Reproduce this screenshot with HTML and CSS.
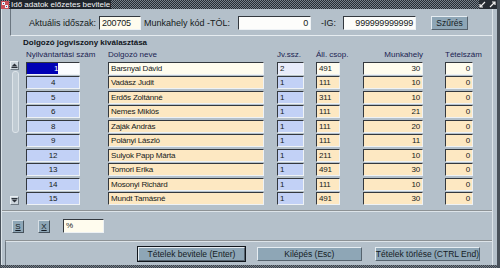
FILE: index.html
```html
<!DOCTYPE html>
<html lang="hu">

<head>
  <meta charset="UTF-8">
  <title>Idő adatok előzetes bevitele</title>
  <link rel="stylesheet" href="styles.css">
</head>

<body>
  <div class="window">
    <div class="titlebar">
      <span class="title-icon">
        <svg width="8" height="8" viewBox="0 0 8 8">
          <rect x="0" y="0" width="8" height="8" fill="#c8505a"/>
          <rect x="1" y="1" width="3" height="3" fill="#f4f4f4"/>
          <rect x="4" y="4" width="3" height="3" fill="#f4f4f4"/>
          <rect x="2" y="2" width="1" height="1" fill="#3050a0"/>
          <rect x="5" y="5" width="1" height="1" fill="#3050a0"/>
        </svg>
      </span>
      <span class="title-text">Idő adatok előzetes bevitele</span>
      <span class="title-fill"></span>
      <span class="title-btns">
        <svg width="7" height="7" viewBox="0 0 7 7">
          <path d="M6 1L1.5 5.5M1 3v3h3" stroke="#f0f0f0" fill="none" stroke-width="1.2"/>
        </svg>
        <svg width="7" height="7" viewBox="0 0 7 7">
          <path d="M1 6L5.5 1.5M3 1h3v3" stroke="#f0f0f0" fill="none" stroke-width="1.2"/>
        </svg>
      </span>
    </div>

    <div class="canvas">
      <div class="filter-frame">
        <span class="lbl lbl-period">Aktuális időszak:</span>
        <div class="field f-cream f-period">200705</div>
        <span class="lbl lbl-from">Munkahely kód -TÓL:</span>
        <div class="field f-white f-code num">0</div>
        <span class="lbl lbl-to">-IG:</span>
        <div class="field f-white f-code num">999999999999</div>
        <button class="btn btn-filter">Szűrés</button>
      </div>

      <div class="list-frame">
        <div class="section-title">Dolgozó jogviszony kiválasztása</div>
        <div class="grid">
          <div class="hd hd-nyilv">Nyilvántartási szám</div>
          <div class="hd">Dolgozó neve</div>
          <div class="hd">Jv.ssz.</div>
          <div class="hd">Áll. csop.</div>
          <div class="hd hd-right hd-munka">Munkahely</div>
          <div class="hd hd-right hd-tetel">Tételszám</div>

          <div class="scrollbar">
            <div class="sb-btn">
              <svg width="7" height="5" viewBox="0 0 7 5"><path d="M3.5 0.5L6.5 3.5H0.5z" fill="#2a3038"/><path d="M0.5 4.5h6" stroke="#2a3038"/></svg>
            </div>
            <div class="sb-track"><div class="sb-thumb"></div></div>
            <div class="sb-btn">
              <svg width="7" height="5" viewBox="0 0 7 5"><path d="M0.5 0.5h6" stroke="#2a3038"/><path d="M0.5 1.5H6.5L3.5 4.5z" fill="#2a3038"/></svg>
            </div>
          </div>

          <div class="field f-nyilv f-selected"><span class="sel-text">1</span></div>
          <div class="field f-name f-cream">Barsnyai Dávid</div>
          <div class="field f-jv f-pale">2</div>
          <div class="field f-all f-cream">491</div>
          <div class="field f-munka f-cream num">30</div>
          <div class="field f-tetel f-cream num">0</div>

          <div class="field f-nyilv f-blue">4</div>
          <div class="field f-name f-peach">Vadász Judit</div>
          <div class="field f-jv f-blue">1</div>
          <div class="field f-all f-peach">111</div>
          <div class="field f-munka f-peach num">10</div>
          <div class="field f-tetel f-peach num">0</div>

          <div class="field f-nyilv f-blue">5</div>
          <div class="field f-name f-peach">Erdős Zoltánné</div>
          <div class="field f-jv f-blue">1</div>
          <div class="field f-all f-peach">311</div>
          <div class="field f-munka f-peach num">10</div>
          <div class="field f-tetel f-peach num">0</div>

          <div class="field f-nyilv f-blue">6</div>
          <div class="field f-name f-peach">Nemes Miklós</div>
          <div class="field f-jv f-blue">1</div>
          <div class="field f-all f-peach">111</div>
          <div class="field f-munka f-peach num">21</div>
          <div class="field f-tetel f-peach num">0</div>

          <div class="field f-nyilv f-blue">8</div>
          <div class="field f-name f-peach">Zaják András</div>
          <div class="field f-jv f-blue">1</div>
          <div class="field f-all f-peach">111</div>
          <div class="field f-munka f-peach num">20</div>
          <div class="field f-tetel f-peach num">0</div>

          <div class="field f-nyilv f-blue">9</div>
          <div class="field f-name f-peach">Polányi László</div>
          <div class="field f-jv f-blue">1</div>
          <div class="field f-all f-peach">111</div>
          <div class="field f-munka f-peach num">11</div>
          <div class="field f-tetel f-peach num">0</div>

          <div class="field f-nyilv f-blue">12</div>
          <div class="field f-name f-peach">Sulyok Papp Márta</div>
          <div class="field f-jv f-blue">1</div>
          <div class="field f-all f-peach">211</div>
          <div class="field f-munka f-peach num">10</div>
          <div class="field f-tetel f-peach num">0</div>

          <div class="field f-nyilv f-blue">13</div>
          <div class="field f-name f-peach">Tomori Erika</div>
          <div class="field f-jv f-blue">1</div>
          <div class="field f-all f-peach">491</div>
          <div class="field f-munka f-peach num">30</div>
          <div class="field f-tetel f-peach num">0</div>

          <div class="field f-nyilv f-blue">14</div>
          <div class="field f-name f-peach">Mosonyi Richárd</div>
          <div class="field f-jv f-blue">1</div>
          <div class="field f-all f-peach">111</div>
          <div class="field f-munka f-peach num">10</div>
          <div class="field f-tetel f-peach num">0</div>

          <div class="field f-nyilv f-blue">15</div>
          <div class="field f-name f-peach">Mundt Tamásné</div>
          <div class="field f-jv f-blue">1</div>
          <div class="field f-all f-peach">491</div>
          <div class="field f-munka f-peach num">30</div>
          <div class="field f-tetel f-peach num">0</div>
        </div>
      </div>

      <div class="tools">
        <button class="btn btn-small btn-s"><u>S</u></button>
        <button class="btn btn-small btn-x"><u>X</u></button>
        <div class="field f-cream f-search">%</div>
      </div>

      <div class="actions">
        <button class="btn btn-action btn-default">Tételek bevitele (Enter)</button>
        <button class="btn btn-action btn-exit">Kilépés (Esc)</button>
        <button class="btn btn-action btn-delete">Tételek törlése (CTRL End)</button>
      </div>
    </div>
    <div class="bottom-edge"></div>
  </div>
</body>

</html>
```

FILE: styles.css
```css
body {
  margin: 0;
  width: 500px;
  height: 268px;
  overflow: hidden;
  font-family: "Liberation Sans", Arial, sans-serif;
  color: #151a20;
}

.window {
  display: flex;
  flex-direction: column;
  width: 500px;
  height: 268px;
  box-sizing: border-box;
  background: #b4c0ca;
  border-left: 1px solid #48515a;
  border-right: 3px solid #48515a;
}

/* title bar */

.titlebar {
  display: flex;
  align-items: center;
  height: 9px;
  flex: none;
  background: repeating-conic-gradient(#76808a 0 25%, #262c33 0 50%) 0 0 / 2px 2px;
}

.title-icon {
  display: flex;
  width: 8px;
  height: 8px;
  margin: 0 1px 0 0;
  flex: none;
}

.title-text {
  height: 9px;
  line-height: 9px;
  padding: 0 1px 0 1px;
  background: #1f252c;
  color: #f2f4f6;
  font-size: 8px;
  white-space: nowrap;
}

.title-fill {
  flex: 1;
}

.title-btns {
  display: flex;
  gap: 3px;
  padding-right: 1px;
  background: #262c33;
  height: 9px;
  align-items: center;
}

.bottom-edge {
  height: 3px;
  flex: none;
  background: repeating-conic-gradient(#76808a 0 25%, #3a4048 0 50%) 0 0 / 2px 2px;
}

/* canvas */

.canvas {
  flex: 1;
  display: flex;
  flex-direction: column;
  margin-right: 4px;
  border-left: 1px solid #dce4e9;
  border-right: 1px solid #dce4e9;
}

.field {
  box-sizing: border-box;
  height: 13px;
  line-height: 11px;
  padding: 0 2px;
  font-size: 8px;
  letter-spacing: -0.2px;
  white-space: nowrap;
  overflow: hidden;
  border-top: 1px solid #33383e;
  border-left: 1px solid #33383e;
  border-bottom: 1px solid #eef2f5;
  border-right: 1px solid #eef2f5;
}

.num {
  text-align: right;
}

.f-white {
  background: #fdfdfb;
}

.f-cream {
  background: #fffcee;
}

.f-peach {
  background: #fde8c2;
}

.f-blue {
  background: #c2d1f6;
}

.f-pale {
  background: #e8ecfb;
}

/* filter */

.filter-frame {
  display: flex;
  align-items: center;
  height: 27px;
  flex: none;
  padding-top: 2px;
  box-sizing: border-box;
  margin-left: 8px;
  border-left: 1px solid #6b7680;
  border-bottom: 1px solid #e6ecf0;
}

.lbl {
  font-size: 9px;
  text-align: right;
  white-space: nowrap;
}

.lbl-period {
  width: 85px;
  margin-right: 3px;
}

.lbl-from {
  width: 89px;
  margin-right: 8px;
}

.lbl-to {
  width: 25px;
  margin-right: 7px;
}

.filter-frame .field {
  height: 14px;
  line-height: 12px;
  font-size: 9px;
}

.f-period {
  width: 42px;
}

.f-code {
  width: 73px;
}

.btn {
  box-sizing: border-box;
  padding: 0;
  font-family: "Liberation Sans", Arial, sans-serif;
  font-size: 8.5px;
  color: #151c24;
  background: #8ea6b6;
  border: 1px solid;
  border-color: #e6edf2 #56636e #56636e #e6edf2;
  white-space: nowrap;
}

.btn-filter {
  width: 37px;
  height: 14px;
  margin-left: 15px;
}

/* list */

.list-frame {
  height: 176px;
  flex: none;
  box-sizing: border-box;
  padding-top: 2px;
  border-bottom: 2px groove #dde4e9;
}

.section-title {
  margin-left: 21px;
  height: 10px;
  line-height: 10px;
  font-size: 8px;
  font-weight: bold;
  color: #10141a;
}

.grid {
  display: grid;
  grid-template-columns: 16px 82px 169px 39px 47px 82px 28px;
  grid-template-rows: 10px repeat(10, 13px);
  row-gap: 1.5px;
  margin-top: 2px;
  margin-left: 8px;
}

.hd {
  font-size: 8px;
  line-height: 10px;
  color: #1b2352;
  white-space: nowrap;
}

.hd-nyilv {
  grid-column: 2;
}

.hd-right {
  text-align: right;
}

.hd-munka {
  width: 60px;
}

.hd-tetel {
  width: 28px;
}

.scrollbar {
  grid-column: 1;
  grid-row: 2 / span 10;
  width: 9px;
  display: flex;
  flex-direction: column;
  margin-top: -1px;
}

.sb-btn {
  height: 9px;
  display: flex;
  align-items: center;
  justify-content: center;
  background: #ccd5dc;
  border: 1px solid #e8eef2;
  border-right-color: #6f7a84;
  border-bottom-color: #6f7a84;
  box-sizing: border-box;
}

.sb-track {
  flex: 1;
  padding: 1px 1px;
}

.sb-thumb {
  height: 60px;
  width: 5px;
  margin-left: 1px;
  border: 1px solid #dde4e9;
  border-radius: 3px;
  background: #c1ccd4;
}

.f-nyilv {
  grid-column: 2;
  width: 54px;
  text-align: center;
}

.f-selected {
  background: linear-gradient(to right, #0000b4 0 31px, #fafcff 31px);
  text-align: left;
  padding-left: 27px;
}

.sel-text {
  color: #ffffff;
}

.f-name {
  width: 156px;
}

.f-jv {
  width: 27px;
}

.f-all {
  width: 24px;
}

.f-munka {
  width: 60px;
}

.f-tetel {
  width: 28px;
}

/* tools */

.tools {
  display: flex;
  align-items: center;
  height: 28px;
  flex: none;
}

.btn-small {
  width: 12px;
  height: 13px;
  font-size: 8px;
  border-color: #d6dee4 #46525c #46525c #d6dee4;
}

.btn-s {
  margin-left: 10px;
}

.btn-x {
  margin-left: 14px;
}

.f-search {
  width: 41px;
  height: 14px;
  margin-left: 13px;
}

/* actions */

.actions {
  flex: 1;
  display: flex;
  align-items: center;
  margin-left: 3px;
  border-left: 1px solid #6b7680;
  border-top: 2px groove #dde4e9;
  padding-left: 132px;
}

.btn-action {
  height: 14px;
  width: 107px;
  margin-right: 12px;
}

.btn-default {
  width: 109px;
  margin-right: 12px;
  outline: 1px solid #10161c;
  outline-offset: 0;
}

.btn-exit {
  margin-right: 13px;
}
```
